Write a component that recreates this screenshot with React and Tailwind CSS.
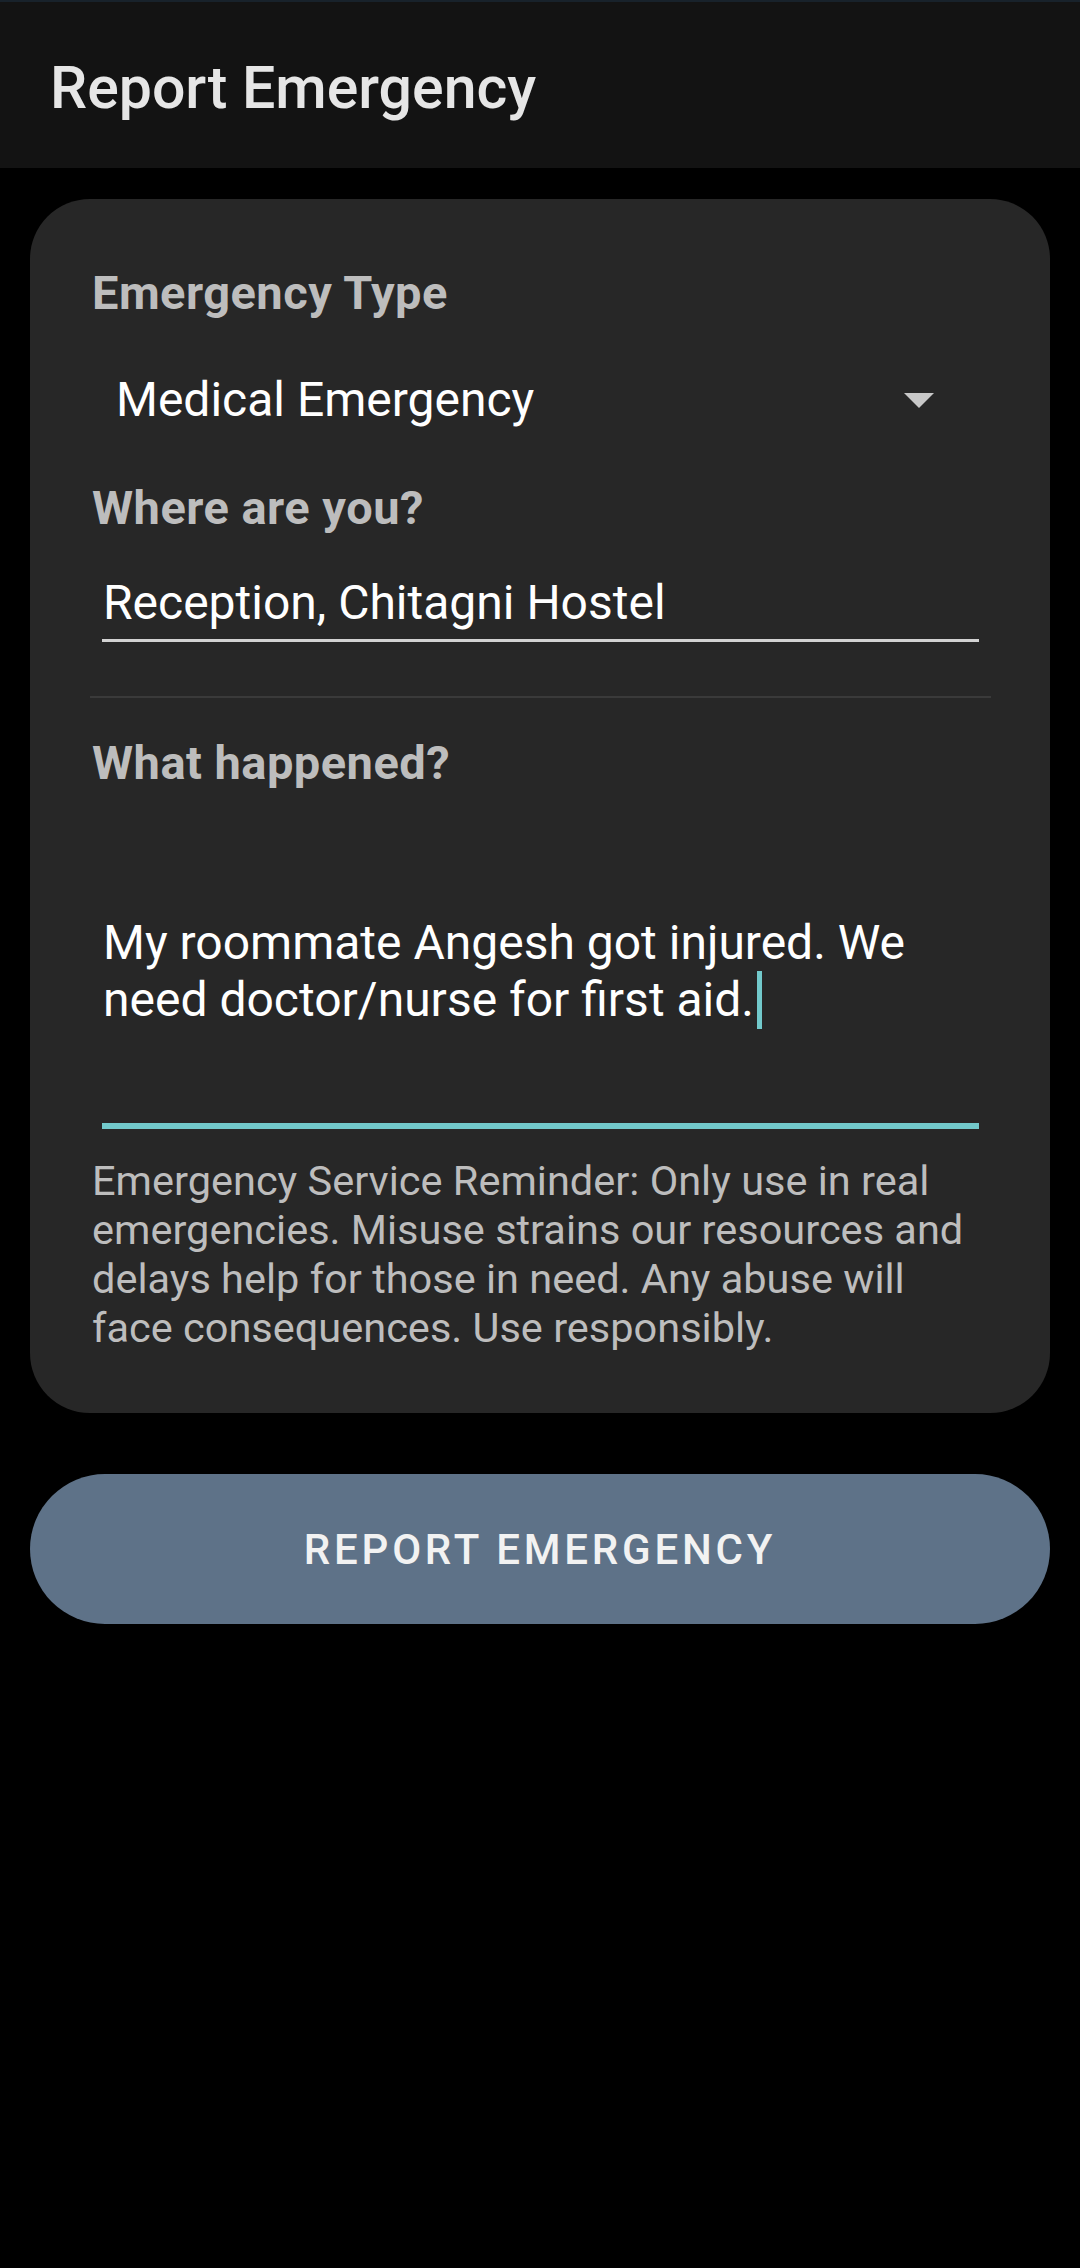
export default function App() {
  return (
    <div className="min-h-[2268px] w-[1080px] bg-black font-['Roboto','Liberation_Sans',sans-serif]">
      <header className="flex h-[168px] items-center border-t-2 border-[#18222b] bg-[#131313] pl-[50px] pt-[6px]">
        <h1 className="text-[59px] font-medium leading-[68px] text-[#e6e6e6]">Report Emergency</h1>
      </header>

      <div className="mx-[30px] mt-[31px] rounded-[60px] bg-[#272727] px-[62px] pb-[61px] pt-[66px]">
        <label className="block text-[47px] font-bold leading-[55px] tracking-[0.01em] text-[#bdbdbd]">Emergency Type</label>
        <div className="mt-[52px] flex items-center justify-between pl-[24px] pr-[54px]">
          <span className="text-[48px] leading-[56px] text-white">Medical Emergency</span>
          <svg width="30" height="15" viewBox="0 0 30 15">
            <path d="M0 0 L30 0 L15 15 Z" fill="#c8c8c8" />
          </svg>
        </div>

        <label className="mt-[52px] block text-[47px] font-bold leading-[55px] tracking-[0.01em] text-[#bdbdbd]">Where are you?</label>
        <div className="ml-[10px] mr-[9px] mt-[40px]">
          <div className="pl-[1px] text-[48px] leading-[56px] text-white">Reception, Chitagni Hostel</div>
          <div className="mt-[8px] h-[3px] bg-[#d2d2d2]" />
        </div>

        <div className="-ml-[2px] -mr-[3px] mt-[54px] h-[2px] bg-[#3a3a3a]" />

        <label className="mt-[37px] block text-[47px] font-bold leading-[55px] tracking-[0.01em] text-[#bdbdbd]">What happened?</label>
        <div className="ml-[10px] mr-[9px] mt-[124px]">
          <div className="pl-[1px] text-[48px] leading-[57px] text-white">
            My roommate Angesh got injured. We
            <br />
            need doctor/nurse for first aid.
            <span className="ml-[3px] inline-block h-[58px] w-[5px] bg-[#72c9cb] align-top" />
          </div>
          <div className="mt-[94px] h-[6px] bg-[#72c9cb]" />
        </div>

        <p className="mt-[27px] text-[41.5px] leading-[49px] text-[#bdbdbd]">
          Emergency Service Reminder: Only use in real
          <br />
          emergencies. Misuse strains our resources and
          <br />
          delays help for those in need. Any abuse will
          <br />
          face consequences. Use responsibly.
        </p>
      </div>

      <div className="mx-[30px] mt-[61px]">
        <button className="flex h-[150px] w-full items-center justify-center rounded-full bg-[#5e7288] text-[42px] font-medium tracking-[0.09em] text-[#f2f2f2]">
          REPORT EMERGENCY
        </button>
      </div>
    </div>
  );
}
